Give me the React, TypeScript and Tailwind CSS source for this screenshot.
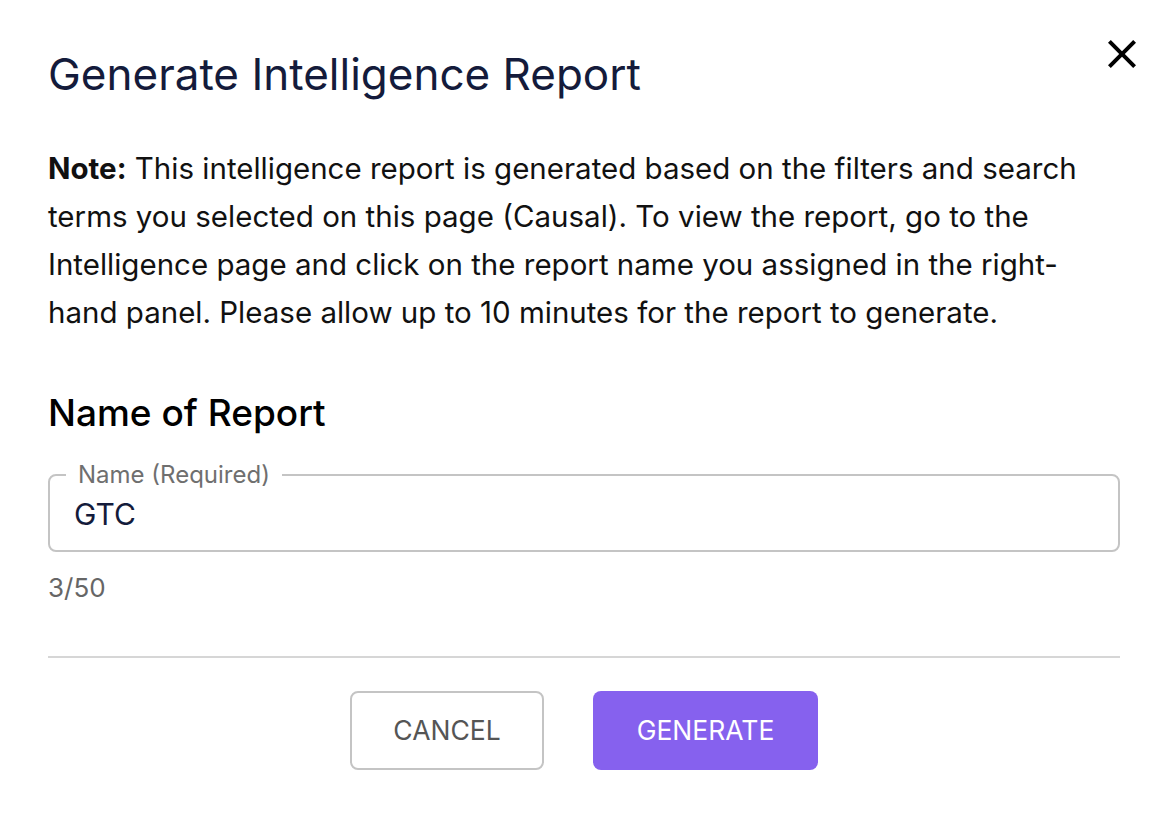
import { useState } from 'react';

function CloseIcon() {
  return (
    <svg viewBox="0 0 24 24" className="w-12 h-12" fill="#000">
      <path d="M19 6.41 17.59 5 12 10.59 6.41 5 5 6.41 10.59 12 5 17.59 6.41 19 12 13.41 17.59 19 19 17.59 13.41 12z" />
    </svg>
  );
}

export default function App() {
  const [name, setName] = useState('GTC');

  return (
    <div className="min-h-screen bg-white font-['Inter',sans-serif]">
      <div className="pl-12 pr-11 pt-[50px] pb-11">
        <div className="flex items-start justify-between">
          <h1 className="text-[44px] leading-[48px] text-[#141b3b] font-normal">Generate Intelligence Report</h1>
          <button className="-mt-5 -mr-[26px] text-black">
            <CloseIcon />
          </button>
        </div>

        <p className="mt-[46px] text-[29.5px] leading-[48px] text-[#111]">
          <span className="font-bold">Note:</span> This intelligence report is generated based on the filters and search
          terms you selected on this page (Causal). To view the report, go to the Intelligence page and click on the
          report name you assigned in the right-hand panel. Please allow up to 10 minutes for the report to generate.
        </p>

        <h2 className="mt-[55px] text-[37px] leading-[44px] text-black font-medium">Name of Report</h2>

        <fieldset className="mt-[26px] border-2 border-[#c4c4c4] rounded-lg px-6 pb-[18px] pt-0">
          <legend className="px-3 -ml-2 text-[24px] leading-[28px] text-[#6f6f6f]">Name (Required)</legend>
          <input
            value={name}
            onChange={(e) => setName(e.target.value)}
            maxLength={50}
            className="block w-full mt-[7px] text-[30px] leading-[36px] text-[#141b3b] outline-none bg-transparent"
          />
        </fieldset>

        <div className="mt-5 text-[26px] leading-[32px] text-[#666]">{name.length}/50</div>

        <div className="mt-[52px] h-[2px] bg-[#d6d6d6]" />

        <div className="mt-[33px] flex justify-center gap-[49px]">
          <button className="w-[194px] h-[79px] rounded-lg border-2 border-[#c4c4c4] bg-white text-[26.5px] text-[#555] uppercase">
            Cancel
          </button>
          <button className="w-[225px] h-[79px] rounded-lg bg-[#8661ee] text-[26.5px] text-white uppercase">
            Generate
          </button>
        </div>
      </div>
    </div>
  );
}
